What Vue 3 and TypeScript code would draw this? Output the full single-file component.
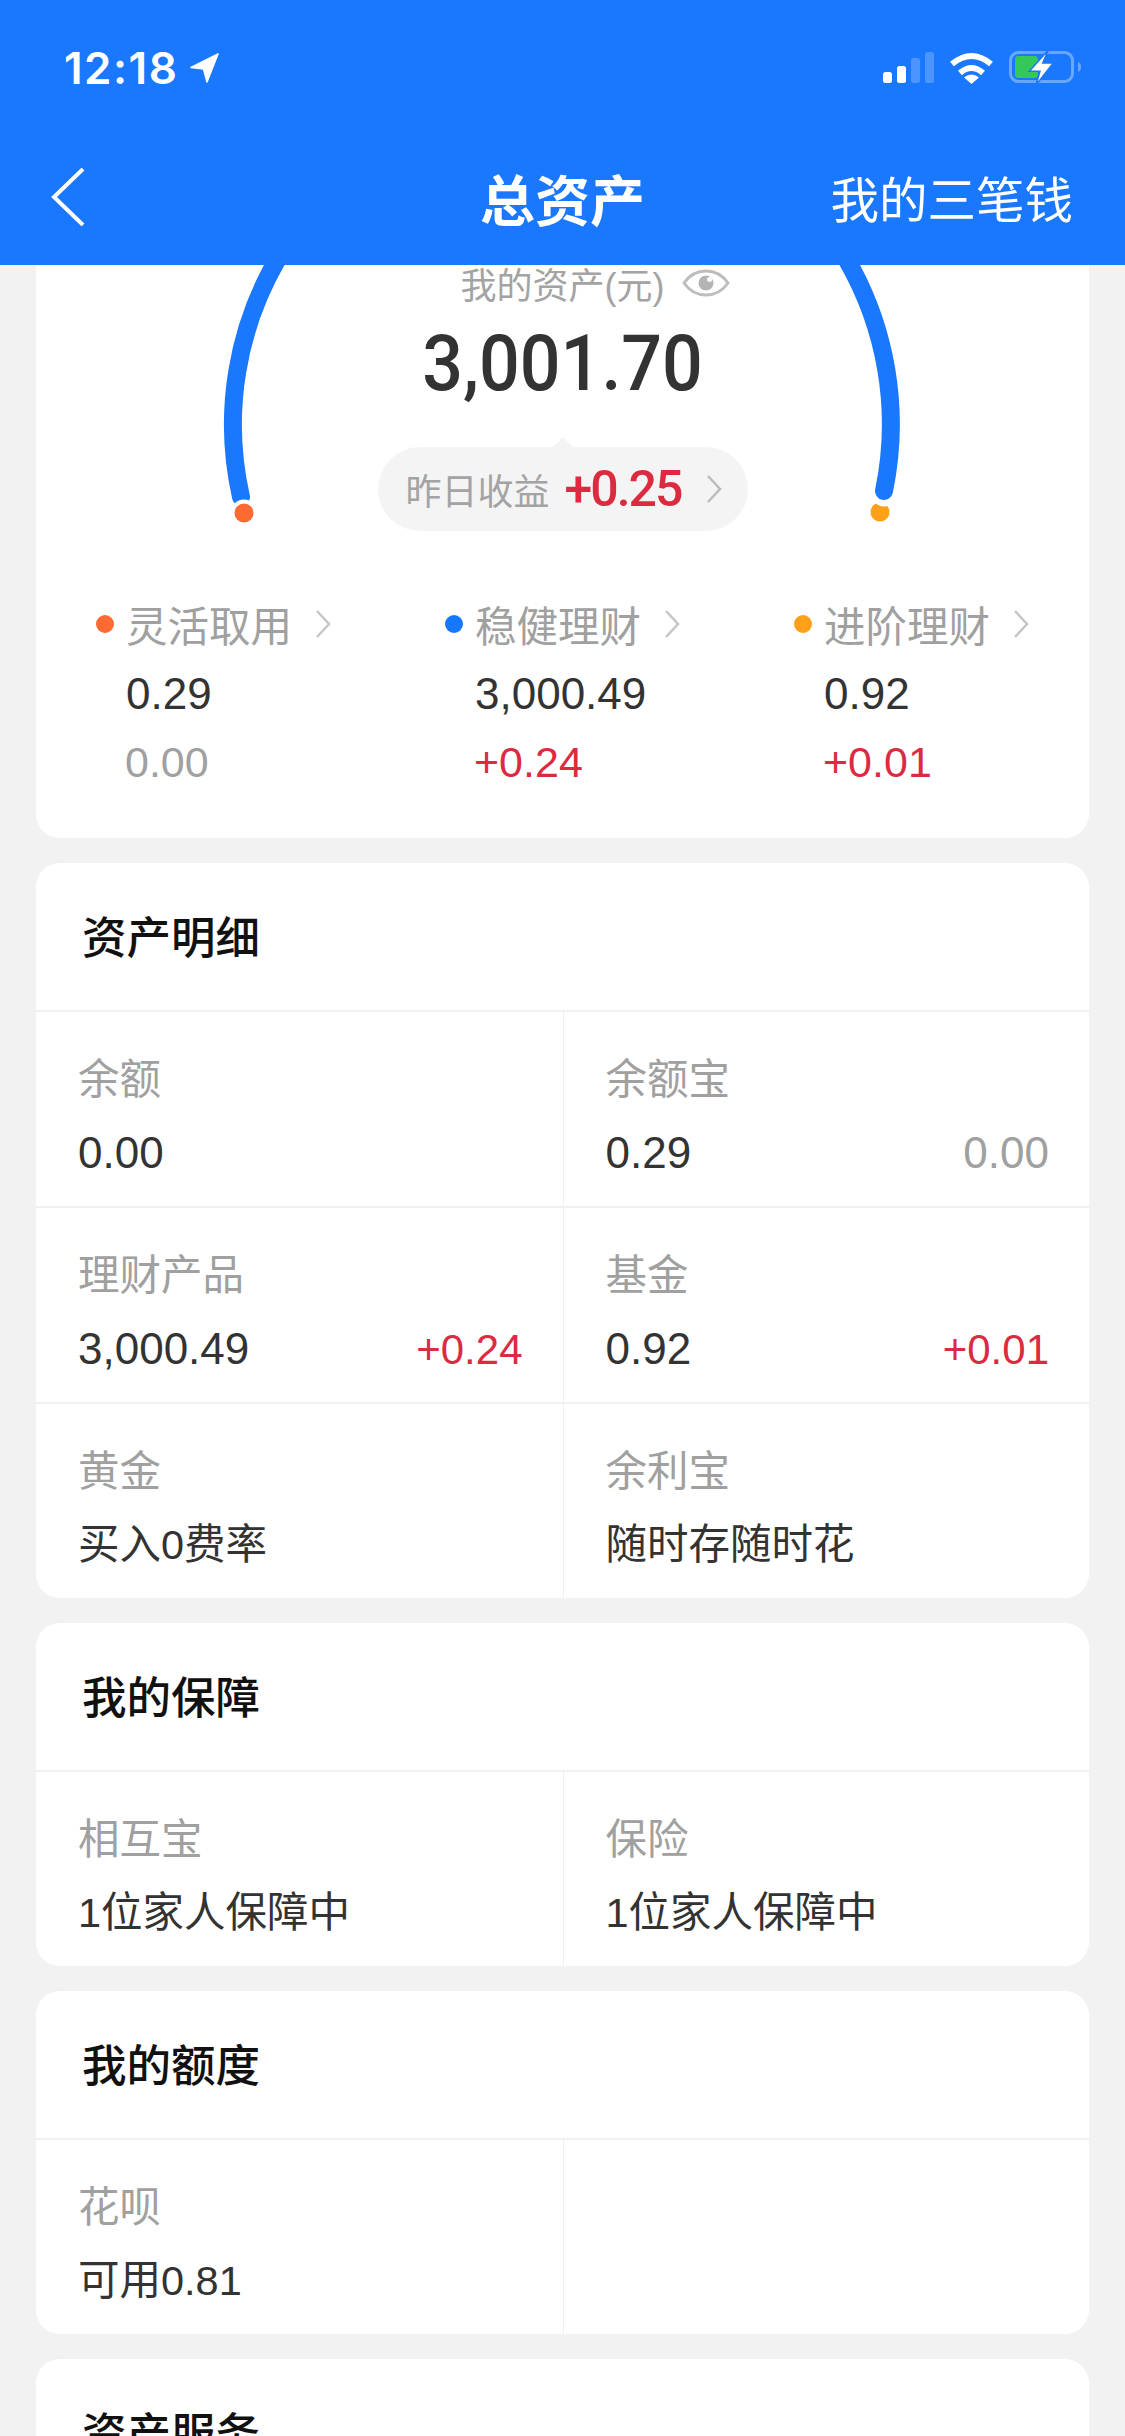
<script setup lang="ts">
interface Cell { label: string; value: string; delta?: string; muted?: boolean; num?: boolean }
interface Section { title: string; cells: Cell[] }

const summary = [
  { name: '灵活取用', dot: '#ff6a33', amount: '0.29', delta: '0.00', up: false },
  { name: '稳健理财', dot: '#1677ff', amount: '3,000.49', delta: '+0.24', up: true },
  { name: '进阶理财', dot: '#ff9f1a', amount: '0.92', delta: '+0.01', up: true },
]

const sections: Section[] = [
  {
    title: '资产明细',
    cells: [
      { label: '余额', value: '0.00', num: true },
      { label: '余额宝', value: '0.29', delta: '0.00', muted: true, num: true },
      { label: '理财产品', value: '3,000.49', delta: '+0.24', num: true },
      { label: '基金', value: '0.92', delta: '+0.01', num: true },
      { label: '黄金', value: '买入0费率' },
      { label: '余利宝', value: '随时存随时花' },
    ],
  },
  {
    title: '我的保障',
    cells: [
      { label: '相互宝', value: '1位家人保障中' },
      { label: '保险', value: '1位家人保障中' },
    ],
  },
  {
    title: '我的额度',
    cells: [
      { label: '花呗', value: '可用0.81' },
      { label: '', value: '' },
    ],
  },
]
</script>

<template>
  <div class="page">
    <header class="top">
      <div class="status">
        <div class="time">12:18
          <svg class="loc" width="30" height="30" viewBox="0 0 30 30"><path d="M28 1 1 14.500l12.500 1.500L17 29z" fill="#fff" stroke="#fff" stroke-width="1.500" stroke-linejoin="round" /></svg>
        </div>
        <div class="status-icons">
          <svg width="51" height="32" viewBox="0 0 51 32">
            <rect x="0" y="20" width="9" height="11" rx="2.500" fill="#fff" />
            <rect x="14" y="14" width="9" height="17" rx="2.500" fill="#fff" />
            <rect x="28" y="6" width="9" height="25" rx="2.500" fill="#fff" opacity=".22" />
            <rect x="42" y="0" width="9" height="31" rx="2.500" fill="#fff" opacity=".22" />
          </svg>
          <svg width="45" height="32" viewBox="0 0 45 32" fill="none" stroke="#fff" stroke-width="6">
            <path d="M3 12Q22.500-4 42 12" />
            <path d="M11 21Q22.500 11 34 21" />
            <path d="M22.500 32 15 25.500Q22.500 19.500 30 25.500z" fill="#fff" stroke="none" />
          </svg>
          <svg class="battery" width="73" height="36" viewBox="0 0 73 36">
            <rect x="1.500" y="2.500" width="62" height="29" rx="8" fill="none" stroke="#fff" opacity=".35" stroke-width="3" />
            <rect x="6" y="6" width="23" height="22" rx="3.500" fill="#34c759" />
            <path d="M69 12c4 1 4 9 0 10z" fill="#fff" opacity=".35" />
            <path d="M39.300 0 20.300 21.300H31L27 35 44.300 13H33.700z" fill="#fff" stroke="#1a78ff" stroke-width="1.500" />
          </svg>
        </div>
      </div>
      <div class="nav">
        <svg class="back" width="34" height="58" viewBox="0 0 34 58" fill="none" stroke="#fff" stroke-width="4"><path d="M32 1 3 29l29 28" /></svg>
        <div class="nav-title">总资产</div>
        <div class="nav-right">我的三笔钱</div>
      </div>
    </header>

    <main class="body">
      <section class="card hero">
        <svg class="arc" width="1053" height="305" viewBox="36 265 1053 305" fill="none">
          <path d="M280 255A329 329 0 0 0 241 497" stroke="#1a78ff" stroke-width="18" stroke-linecap="round" />
          <circle cx="244" cy="513" r="11.500" fill="#ff6a33" stroke="#fff" stroke-width="4" />
          <circle cx="880" cy="512" r="9.500" fill="#ff9f1a" />
          <circle cx="884" cy="494" r="12.500" fill="#fff" />
          <path d="M844 255A329 329 0 0 1 884 491" stroke="#1a78ff" stroke-width="18" stroke-linecap="round" />
        </svg>
        <div class="gauge">
          <div class="mine">我的资产(元)
            <svg class="eye" width="48" height="34" viewBox="0 0 48 34" fill="none" stroke="#bdbdbd" stroke-width="3">
              <path d="M2 17C13 1 35 1 46 17 35 33 13 33 2 17z" />
              <circle cx="24" cy="17" r="7.500" fill="#b4b4b4" stroke="none" />
              <circle cx="27.500" cy="13.500" r="2.500" fill="#fff" stroke="none" />
            </svg>
          </div>
          <div class="total">3,001.70</div>
          <div class="yest">
            <span class="yest-label">昨日收益</span>
            <span class="yest-num">+0.25</span>
            <svg class="chev" width="18" height="30" viewBox="0 0 18 30" fill="none" stroke="#bbb" stroke-width="2.500"><path d="M3 2l12 13L3 28" /></svg>
          </div>
        </div>
        <div class="summary">
          <div v-for="s in summary" :key="s.name" class="sum-col">
            <div class="sum-head">
              <i class="dot" :style="{ background: s.dot }"></i>
              <span>{{ s.name }}</span>
              <svg class="chev" width="18" height="30" viewBox="0 0 18 30" fill="none" stroke="#c6c6c6" stroke-width="2.500"><path d="M3 2l12 13L3 28" /></svg>
            </div>
            <div class="sum-amount">{{ s.amount }}</div>
            <div class="sum-delta" :class="{ up: s.up }">{{ s.delta }}</div>
          </div>
        </div>
      </section>

      <section v-for="sec in sections" :key="sec.title" class="card">
        <h2 class="sec-title">{{ sec.title }}</h2>
        <div class="grid">
          <div v-for="(c, i) in sec.cells" :key="i" class="cell">
            <div class="cell-label">{{ c.label }}</div>
            <div class="cell-row">
              <span class="cell-value" :class="{ num: c.num }">{{ c.value }}</span>
              <span v-if="c.delta" class="cell-delta" :class="{ muted: c.muted }">{{ c.delta }}</span>
            </div>
          </div>
        </div>
      </section>

      <section class="card">
        <h2 class="sec-title">资产服务</h2>
      </section>
    </main>
  </div>
</template>

<style>
html, body { margin: 0; height: 2436px; overflow: hidden; background: #f2f2f2; }
</style>

<style scoped>
.page {
  width: 1125px;
  height: 2436px;
  overflow: hidden;
  background: #f2f2f2;
  font-family: "Liberation Sans", "Noto Sans CJK SC", sans-serif;
  color: #333;
}
.top {
  height: 265px;
  background: #1a78ff;
  color: #fff;
  position: relative;
  z-index: 2;
}
.status {
  height: 136px;
  padding: 0 43px 0 64px;
  display: flex;
  align-items: center;
  justify-content: space-between;
  box-sizing: border-box;
}
.time { font-size: 44px; font-weight: 600; display: flex; align-items: center; gap: 12px; font-family: Inter, sans-serif; letter-spacing: 1.500px; }
.status-icons { display: flex; align-items: center; gap: 15px; }
.nav { display: flex; align-items: center; justify-content: space-between; padding: 0 52px 0 51px; height: 122px; position: relative; }
.nav-title {
  position: absolute;
  left: 0; right: 0;
  text-align: center;
  font-size: 55px;
  font-weight: 700;
}
.nav-right { font-size: 48.500px; }
.body { padding: 0 36px; display: flex; flex-direction: column; gap: 25px; }
.card { background: #fff; border-radius: 24px; overflow: hidden; }
.hero { height: 573px; border-radius: 0 0 24px 24px; position: relative; }
.arc { position: absolute; left: 0; top: 0; display: block; }
.gauge { height: 305px; position: relative; display: flex; flex-direction: column; align-items: center; }
.mine { display: flex; align-items: center; gap: 18px; font-size: 36px; color: #a3a3a3; height: 40px; margin-top: -2px; margin-right: -66px; }
.total { font-size: 78px; font-weight: 500; font-family: Roboto, sans-serif; color: #333; line-height: 90px; margin-top: 16px; transform: scaleX(.92); }
.yest {
  position: relative;
  margin-top: 38px;
  height: 84px;
  width: 370px;
  box-sizing: border-box;
  padding: 0 25px 0 28px;
  border-radius: 42px;
  background: #f4f4f4;
  display: flex;
  align-items: center;
  gap: 15px;
}
.yest::before {
  content: "";
  position: absolute;
  left: 50%;
  top: -10px;
  margin-left: -11px;
  border-left: 11px solid transparent;
  border-right: 11px solid transparent;
  border-bottom: 11px solid #f4f4f4;
}
.yest-label { font-size: 36px; color: #a3a3a3; }
.yest-num { font-size: 50px; font-weight: 500; font-family: Roboto, sans-serif; letter-spacing: -2px; color: #dc2a41; }
.yest .chev { margin-left: auto; }
.summary { display: grid; grid-template-columns: repeat(3, 349px); padding: 29px 0 0 60px; }
.sum-head { display: flex; align-items: center; font-size: 41.500px; color: #a0a0a0; height: 50px; }
.sum-head span { margin-left: 12px; }
.sum-head .chev { margin-left: 22px; }
.dot { width: 18px; height: 18px; border-radius: 50%; }
.sum-amount { font-size: 44px; color: #333; padding-left: 30px; margin-top: 20px; line-height: 50px; }
.sum-delta { font-size: 43px; color: #a0a0a0; padding-left: 29px; margin-top: 18px; line-height: 50px; }
.sum-delta.up { color: #dc2a41; }
.sec-title { margin: 0; font-size: 44.500px; font-weight: 500; color: #111; height: 149px; line-height: 152px; box-sizing: border-box; padding-left: 46px; border-bottom: 2px solid #f0f0f0; }
.grid { display: grid; grid-template-columns: 1fr 1fr; }
.cell { height: 196px; box-sizing: border-box; padding: 43px 40px 0 42px; border-bottom: 2px solid #f0f0f0; }
.cell:nth-child(even) { border-left: 1px solid #f0f0f0; }
.cell-label { font-size: 41.500px; color: #a0a0a0; line-height: 50px; }
.cell-row { display: flex; justify-content: space-between; align-items: baseline; font-size: 41.500px; color: #333; line-height: 50px; margin-top: 23px; }
.cell-value.num { font-size: 44px; }
.cell-delta { font-size: 42px; color: #dc2a41; }
.cell-delta.muted { font-size: 44px; color: #a0a0a0; }
.grid .cell:nth-last-child(-n + 2) { height: 194px; border-bottom: none; }
</style>
